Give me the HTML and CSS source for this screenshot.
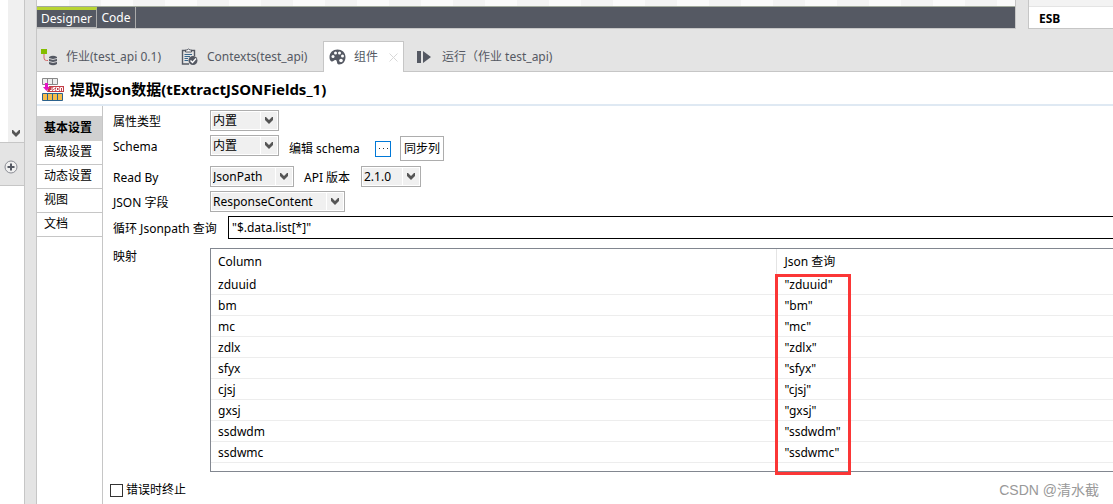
FILE: index.html
```html
<!DOCTYPE html>
<html lang="zh-CN">
<head>
<meta charset="utf-8">
<title>tExtractJSONFields_1</title>
<link rel="stylesheet" href="styles.css">
</head>
<body>
<aside class="rail">
  <div class="rail-scroll"><div class="scrollbar"><svg width="8" height="7" viewBox="0 0 8 7"><path d="M0 0H1L4 3L7 0H8V3L4 7L0 3Z" fill="#555"/></svg></div></div>
  <div class="rail-tools"><button class="add" aria-label="Add"><svg width="14" height="14" viewBox="0 0 14 14"><circle cx="7" cy="7" r="6" fill="#f0f0f0" stroke="#8a8c94"/><path d="M7 3.5V10.5M3.5 7H10.5" stroke="#555963" stroke-width="2"/></svg></button></div>
</aside>
<div class="workspace">
  <div class="top">
    <section class="editor">
      <div class="canvas"></div>
      <div class="modes"><button class="mode active">Designer</button><button class="mode">Code</button></div>
    </section>
    <section class="palette">
      <div class="palette-item shaded"></div>
      <div class="palette-item">ESB</div>
    </section>
  </div>
  <nav class="tabs">
    <button class="tab tab-job"><svg width="18" height="18" viewBox="0 0 18 18"><rect x="1" y="1" width="6" height="5" fill="#84bd00"/><path d="M4 6V10Q4 12.500 6.500 12.500H8" fill="none" stroke="#d46a6a"/><path d="M9 9Q13 6.500 17 9V16Q13 18.500 9 16Z" fill="#555963"/><path d="M9 10.500Q13 12.500 17 10.500M9 13.500Q13 15.500 17 13.500" fill="none" stroke="#d5d5d8"/></svg>作业(test_api 0.1)</button>
    <button class="tab tab-contexts"><svg width="17" height="18" viewBox="0 0 17 18"><path d="M5 2.500H1.500V16H8M10 2.500H13.500V8" fill="none" stroke="#555963" stroke-width="1.400"/><path d="M4.500 4V2H6Q7.500 0 9 2H10.500V4Z" fill="#fff" stroke="#555963"/><path d="M3.500 6.500H11M3.500 8.500H9M3.500 10.500H7M3.500 12.500H7" stroke="#37658b"/><circle cx="12" cy="12.500" r="4.500" fill="#555963"/><path d="M9.500 12.500L11.500 14.500L15 10.500" fill="none" stroke="#fff" stroke-width="1.400"/></svg>Contexts(test_api)</button>
    <button class="tab tab-component active"><svg width="17" height="17" viewBox="0 0 17 17"><path d="M8.500 0.500C13 0.500 16.500 3.500 16.500 8S14 15.500 10 15.500C7 15.500 9 11.500 6.500 11C5 10.700 4.500 13 2.500 12.500C1 12 0.500 10 0.500 8C0.500 3.500 4 .5 8.500 .5Z" fill="#555963"/><g fill="#fff"><circle cx="4" cy="7.500" r="1.500"/><circle cx="6.500" cy="4" r="1.500"/><circle cx="10.500" cy="4" r="1.500"/><circle cx="13.500" cy="7" r="1.500"/><circle cx="12" cy="11.500" r="1.800"/></g></svg>组件<svg class="close" width="9" height="9" viewBox="0 0 9 9"><path d="M.5 .5L8.500 8.500M8.500 .5L.5 8.500" stroke="#d8d8d8"/></svg></button>
    <button class="tab tab-run"><svg width="14" height="12" viewBox="0 0 14 12"><path d="M0 0H4V12H0ZM6 0L14 6L6 12Z" fill="#555963"/></svg>运行（作业 test_api)</button>
  </nav>
  <header class="heading">
    <svg width="22" height="23" viewBox="0 0 22 23"><path d="M.5 .5H15.500V6.500H.5ZM5.500 .5V6.500M10.500 .5V6.500" fill="#eee" stroke="#888"/><path d="M7 8H22V14H5Z" fill="#c33c46"/><path d="M3 5H6V9H8L4.500 13L1 9H3Z" fill="#e315c4"/><path d="M8 12.500H10V9.500M13.500 9.500H11.500V11H13V12.500H11M14.500 9.500H17V12.500H14.500ZM18.500 13V9.500H20.500V13" fill="none" stroke="#fff"/><path d="M.5 15.500H20.500V22.500H.5ZM5.500 15.500V22.500M10.500 15.500V22.500M15.500 15.500V22.500" fill="#f6bd4b" stroke="#2b628e"/></svg>
    <h1>提取json数据(tExtractJSONFields_1)</h1>
  </header>
  <main class="content">
    <nav class="sections">
      <button class="section active">基本设置</button><button class="section">高级设置</button><button class="section">动态设置</button><button class="section">视图</button><button class="section">文档</button>
    </nav>
    <form class="form">
      <div class="row">
        <label class="label" for="prop">属性类型</label>
        <span class="combo short"><select id="prop"><option>内置</option></select><svg viewBox="0 0 8 7"><path d="M0 0H1L4 3L7 0H8V3L4 7L0 3Z"/></svg></span>
      </div>
      <div class="row schema">
        <label class="label" for="schema">Schema</label>
        <span class="combo short"><select id="schema"><option>内置</option></select><svg viewBox="0 0 8 7"><path d="M0 0H1L4 3L7 0H8V3L4 7L0 3Z"/></svg></span>
        <div class="schema-tools"><span class="caption">编辑 schema</span><button type="button" class="dots" aria-label="编辑 schema"><svg width="9" height="2" viewBox="0 0 9 2"><path d="M0 0H1V1H0ZM4 0H5V1H4ZM8 0H9V1H8Z" fill="#333"/></svg></button><button type="button" class="sync">同步列</button></div>
      </div>
      <div class="row read">
        <label class="label" for="read">Read By</label>
        <span class="combo medium"><select id="read"><option>JsonPath</option></select><svg viewBox="0 0 8 7"><path d="M0 0H1L4 3L7 0H8V3L4 7L0 3Z"/></svg></span>
        <label class="api" for="api">API 版本</label>
        <span class="combo small"><select id="api"><option>2.1.0</option></select><svg viewBox="0 0 8 7"><path d="M0 0H1L4 3L7 0H8V3L4 7L0 3Z"/></svg></span>
      </div>
      <div class="row">
        <label class="label" for="field">JSON 字段</label>
        <span class="combo long"><select id="field"><option>ResponseContent</option></select><svg viewBox="0 0 8 7"><path d="M0 0H1L4 3L7 0H8V3L4 7L0 3Z"/></svg></span>
      </div>
      <div class="row">
        <label class="label query-label" for="query">循环 Jsonpath 查询</label>
        <input class="query" id="query" type="text" value='"$.data.list[*]"'>
      </div>
      <div class="row mapping">
        <span class="label" id="mapping">映射</span>
        <div class="grid">
          <table aria-labelledby="mapping">
            <thead><tr><th>Column</th><th>Json 查询</th></tr></thead>
            <tbody>
              <tr><td>zduuid</td><td>"zduuid"</td></tr>
              <tr><td>bm</td><td>"bm"</td></tr>
              <tr><td>mc</td><td>"mc"</td></tr>
              <tr><td>zdlx</td><td>"zdlx"</td></tr>
              <tr><td>sfyx</td><td>"sfyx"</td></tr>
              <tr><td>cjsj</td><td>"cjsj"</td></tr>
              <tr><td>gxsj</td><td>"gxsj"</td></tr>
              <tr><td>ssdwdm</td><td>"ssdwdm"</td></tr>
              <tr><td>ssdwmc</td><td>"ssdwmc"</td></tr>
            </tbody>
          </table>
          <div class="highlight"></div>
        </div>
      </div>
      <div class="footer"><label class="check"><input type="checkbox">错误时终止</label><span class="watermark">CSDN @清水截</span></div>
    </form>
  </main>
</div>
</body>
</html>
```
FILE: styles.css
```css
* { box-sizing: border-box; }
body {
  margin: 0;
  min-height: 100vh;
  display: flex;
  overflow: hidden;
  background: #e4e4e4;
  color: #000;
  font: 12px/18px "Noto Sans", "Noto Sans CJK SC", sans-serif;
}
button, input, select { font: inherit; color: inherit; margin: 0; }
button { border: 0; padding: 0; background: none; }
svg { display: block; flex: none; }

.rail { width: 25px; flex: none; background: #fff; border-right: 1px solid #c6c6c6; }
.rail-scroll { height: 142px; display: flex; justify-content: flex-end; }
.scrollbar { width: 16px; background: #f0f0f0; display: flex; align-items: flex-end; justify-content: center; padding-bottom: 5px; }
.rail-tools { height: 44px; border: solid #c6c6c6; border-width: 1px 0; background: #e4e4e4; padding: 17px 0 0 4px; }
.add { display: block; }

.workspace { flex: 1; min-width: 0; margin-left: 11px; border-left: 1px solid #c6c6c6; display: flex; flex-direction: column; }
.top { display: flex; gap: 12px; height: 29px; }
.editor { flex: 1; border: solid #c6c6c6; border-width: 0 1px 1px 0; }
.canvas { height: 6px; background: repeating-linear-gradient(90deg, #fafafa 0 32px, #f3f3f3 32px 64px); }
.modes { height: 22px; display: flex; background: #555963; border-top: 1px solid #a2aa9c; color: #fff; }
.mode { padding: 0 4px; border-right: 1px solid #aaa; line-height: 20px; }
.mode.active { border-top: 3px solid #b8d432; border-bottom: 1px solid #bbb; line-height: 15px; }
.modes .mode { font-size: 12px; min-width: 39px; }
.modes .mode.active { min-width: 60px; }
.palette { width: 85px; height: 29px; overflow: hidden; display: flex; flex-direction: column; justify-content: flex-end; background: #fff; border: solid #c6c6c6; border-width: 0 0 1px 1px; font-weight: 700; }
.palette-item { flex: none; height: 21px; padding-left: 10px; line-height: 23px; }
.palette-item.shaded { height: 7px; background: #f3f3f3; border-bottom: 1px solid #e4e4e4; }

.tabs { display: flex; align-items: stretch; height: 43px; padding-top: 12px; border-bottom: 1px solid #c6c6c6; color: #555963; }
.tab { display: flex; align-items: center; gap: 8px; padding-top: 1px; font-weight: 400; white-space: nowrap; }
.tab-job { padding-left: 3px; width: 144px; }
.tab-contexts { width: 142px; gap: 9px; }
.tab-component { width: 81px; padding: 0 5px; }
.tab-component.active { background: #fff; border: 1px solid #c6c6c6; border-bottom: 0; margin-bottom: -1px; }
.tab .close { margin-left: auto; }
.tab-run { padding-left: 13px; gap: 11px; }

.heading { height: 34px; display: flex; align-items: center; gap: 6px; padding: 2px 0 0 5px; background: #fff; border-bottom: 2px solid #dfe9f3; }
h1 { margin: 0; font-size: 15px; line-height: 20px; }

.content { flex: 1; display: flex; background: #fff; }
.sections { width: 66px; flex: none; padding-top: 10px; border-right: 1px solid #c6c6c6; display: flex; flex-direction: column; }
.section { height: 25px; margin-bottom: -1px; padding: 0 7px; text-align: left; border-bottom: 1px solid #c6c6c6; }
.section.active { background: #d0d0d0; border-color: #d0d0d0; font-weight: 700; }

.form { flex: 1; min-width: 0; padding: 4px 0 0 10px; display: flex; flex-direction: column; gap: 4px; }
.row { display: flex; align-items: center; }
.label { width: 97px; flex: none; white-space: nowrap; padding-top: 2px; }
.row.schema { align-items: flex-start; padding-bottom: 1px; }
.schema .label { padding-top: 3px; }
.schema-tools { display: flex; align-items: center; padding: 1px 0 0 10px; }
.caption { width: 86px; }
.dots { width: 16px; height: 16px; border: 1px solid #0078d7; display: flex; align-items: center; justify-content: center; margin-right: 9px; }
.sync { height: 25px; padding: 0 3px; border: 1px solid #adadad; }
.api { width: 67px; padding: 2px 0 0 10px; }
.combo { position: relative; display: block; height: 21px; }
.combo select { appearance: none; display: block; width: 100%; height: 100%; padding: 0 2px; border: 1px solid #adadad; border-radius: 0; background: linear-gradient(#fff, #fff) right 17px top / 1px 100% no-repeat #f0f0f0; box-shadow: inset 0 0 0 1px #fff; line-height: 18px; }
.combo svg { position: absolute; right: 6px; top: 7px; width: 8px; height: 7px; fill: #555; pointer-events: none; }
.short { width: 69px; }
.medium { width: 84px; }
.small { width: 60px; }
.long { width: 135px; }
.query-label { width: 115px; }
.query { flex: 1; min-width: 0; height: 23px; border: 1px solid #000; border-right: 0; padding: 0 3px; background: #fff; }
.mapping { align-items: flex-start; padding-top: 5px; }
.mapping .label { padding-top: 0; }
.grid { position: relative; flex: 1; min-width: 0; border: 1px solid #828790; border-right: 0; padding-bottom: 8px; }
table { width: 100%; table-layout: fixed; border-collapse: separate; border-spacing: 0; }
th, td { height: 21px; padding: 2px 7px 0; text-align: left; line-height: 18px; font-weight: 400; border-bottom: 1px solid #ededed; }
th { height: 25px; padding-top: 0; line-height: 25px; border-bottom: 0; }
th:first-child { width: 62.8%; border-right: 1px solid #e4e4e4; }
.highlight { position: absolute; left: calc(62.8% - 2px); top: 25px; bottom: -4px; width: 76px; border: 3px solid #fb3636; pointer-events: none; }
.footer { display: flex; justify-content: space-between; align-items: center; padding: 2px 14px 0 0; }
.check { display: flex; align-items: center; gap: 3px; margin-left: -3px; }
.check input { appearance: none; width: 13px; height: 13px; border: 1px solid #333; background: #fff; }
.watermark { color: #999; font: 14px/24px "Liberation Sans", "Noto Sans CJK SC", sans-serif; }
```
